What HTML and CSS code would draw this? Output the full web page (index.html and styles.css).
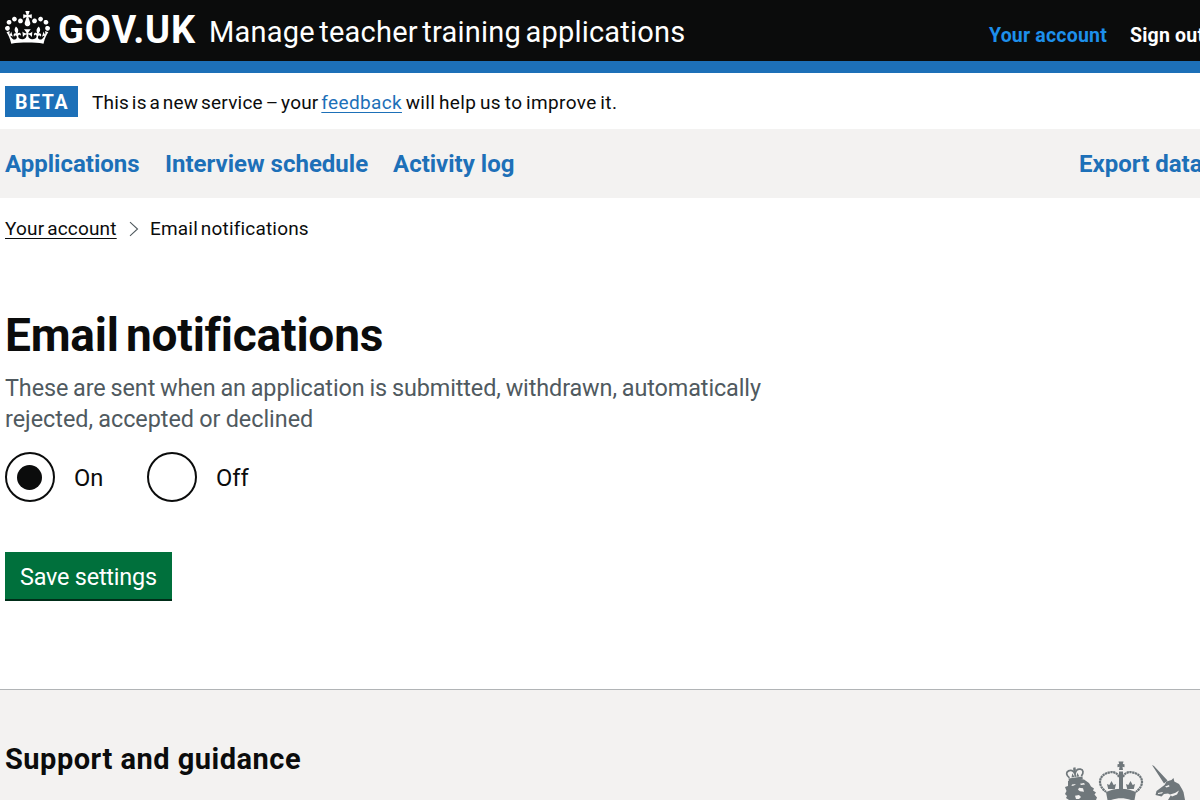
FILE: index.html
```
<!DOCTYPE html>
<html lang="en">
<head>
<meta charset="utf-8">
<title>Email notifications - Manage teacher training applications - GOV.UK</title>
<link rel="stylesheet" href="styles.css">
</head>
<body>
<header class="header">
  <div class="container header-inner">
    <a class="logo" href="#">
      <svg class="crown" viewBox="0 0 132 97" width="45" height="33" fill="currentColor" aria-hidden="true"><path d="M25 30.2c3.5 1.5 7.7-.2 9.1-3.7 1.5-3.6-.2-7.8-3.9-9.2-3.6-1.4-7.6.3-9.1 3.9-1.4 3.5.3 7.5 3.9 9zM9 39.5c3.6 1.5 7.8-.2 9.2-3.7 1.5-3.6-.2-7.8-3.9-9.1-3.6-1.5-7.6.2-9.1 3.8-1.4 3.5.3 7.5 3.8 9zM4.4 57.2c3.5 1.5 7.7-.2 9.1-3.8 1.5-3.6-.2-7.7-3.9-9.1-3.5-1.5-7.6.3-9.1 3.8-1.4 3.5.3 7.6 3.9 9.1zm38.3-21.4c3.5 1.5 7.7-.2 9.1-3.8 1.5-3.6-.2-7.7-3.9-9.1-3.6-1.5-7.6.3-9.1 3.8-1.3 3.6.4 7.7 3.9 9.1zm64.4-5.6c-3.6 1.5-7.8-.2-9.1-3.7-1.5-3.6.2-7.8 3.8-9.2 3.6-1.4 7.7.3 9.2 3.9 1.3 3.5-.4 7.5-3.9 9zm15.9 9.3c-3.6 1.5-7.7-.2-9.1-3.7-1.5-3.6.2-7.8 3.7-9.1 3.6-1.5 7.7.2 9.2 3.8 1.5 3.5-.3 7.5-3.8 9zm4.7 17.7c-3.6 1.5-7.8-.2-9.2-3.8-1.5-3.6.2-7.7 3.9-9.1 3.6-1.5 7.7.3 9.2 3.8 1.3 3.5-.4 7.6-3.9 9.1zM89.3 35.8c-3.6 1.5-7.8-.2-9.2-3.8-1.4-3.6.2-7.7 3.9-9.1 3.6-1.5 7.7.3 9.2 3.8 1.4 3.6-.3 7.7-3.9 9.1zM69.7 17.7l8.9 4.7V9.3l-8.9 2.8c-.2-.3-.5-.6-.9-.9L72.4 0H59.6l3.5 11.2c-.3.3-.6.5-.9.9l-8.8-2.8v13.1l8.8-4.7c.3.3.6.7.9.9l-5 15.4v.1c-.2.8-.4 1.6-.4 2.4 0 4.1 3.1 7.5 7 8.1h.2c.3 0 .7.1 1 .1.4 0 .7 0 1-.1h.2c4-.6 7.1-4.1 7.1-8.1 0-.8-.1-1.7-.4-2.4V34l-5.1-15.4c.4-.2.7-.6 1-.9zM66 92.8c16.9 0 32.8 1.1 47.1 3.2 4-16.9 8.9-26.7 14-33.5l-9.6-3.4c1 4.9 1.1 7.2 0 10.2-1.5-1.4-3-4.3-4.2-8.7L108.6 76c2.8-2 5-3.2 7.5-3.3-4.4 9.4-10 11.9-13.6 11.2-4.3-.8-6.3-4.6-5.6-7.9 1-4.7 5.7-5.9 8-.5 4.3-8.7-3-11.4-7.6-8.8 7.1-7.2 7.9-13.5 2.1-21.1-8 6.1-8.1 12.3-4.5 20.8-4.7-5.4-12.1-2.5-9.5 6.2 3.4-5.2 7.9-2 7.2 3.1-.6 4.3-6.4 7.8-13.5 7.2-10.3-.9-10.9-8-11.2-13.8 2.5-.5 7.1 1.8 11 7.3L80.2 60c-4.1 4.4-8 5.3-12.3 5.4 1.4-4.4 8-11.6 8-11.6H55.5s6.4 7.2 7.9 11.6c-4.2-.1-8-1-12.3-5.4l1.4 16.4c3.9-5.5 8.5-7.7 10.9-7.3-.3 5.8-.9 12.8-11.1 13.8-7.2.6-12.9-2.9-13.5-7.2-.7-5 3.8-8.3 7.1-3.1 2.7-8.7-4.6-11.6-9.4-6.2 3.7-8.5 3.6-14.7-4.6-20.8-5.8 7.6-5 13.9 2.2 21.1-4.7-2.6-11.9.1-7.7 8.8 2.3-5.5 7.1-4.2 8.1.5.7 3.3-1.3 7.1-5.7 7.9-3.5.7-9-1.8-13.5-11.2 2.5.1 4.7 1.3 7.5 3.3l-4.7-15.4c-1.2 4.4-2.7 7.2-4.3 8.7-1.1-3-.9-5.3 0-10.2l-9.5 3.4c5 6.9 9.9 16.7 14 33.5 14.8-2.1 30.8-3.2 47.7-3.2z"/></svg>
      <span class="logo-text">GOV.UK</span>
    </a>
    <a class="service-name" href="#">Manage teacher training applications</a>
    <nav class="account-nav">
      <a class="account-link account-link-active" href="#">Your account</a>
      <a class="account-link sign-out" href="#">Sign out</a>
    </nav>
  </div>
</header>
<div class="phase">
  <div class="container phase-inner">
    <strong class="tag">BETA</strong>
    <span class="phase-text"><span class="phase-intro">This is a new service – your </span><a class="link" href="#">feedback</a> will help us to improve it.</span>
  </div>
</div>
<nav class="primary">
  <div class="container primary-inner">
    <a class="primary-link link-applications" href="#">Applications</a>
    <a class="primary-link link-interviews" href="#">Interview schedule</a>
    <a class="primary-link link-activity" href="#">Activity log</a>
    <a class="primary-link link-export" href="#">Export data</a>
  </div>
</nav>
<main class="container main">
  <div class="breadcrumbs">
    <a class="crumb-link" href="#">Your account</a>
    <svg class="chevron" width="10" height="16" viewBox="0 0 10 16" fill="none" stroke="#505a5f" stroke-width="1.1" aria-hidden="true"><path d="M1 1.200 8.500 8 1 14.800"/></svg>
    <span class="crumb-current">Email notifications</span>
  </div>
  <h1 class="title">Email notifications</h1>
  <p class="hint"><span class="hint-first">These are sent when an application is submitted, withdrawn, automatically</span><br><span class="hint-second">rejected, accepted or declined</span></p>
  <div class="radios">
    <label class="radio"><span class="circle"><span class="dot"></span></span><span class="radio-label">On</span></label>
    <label class="radio"><span class="circle"></span><span class="radio-label">Off</span></label>
  </div>
  <button class="button" type="button">Save settings</button>
</main>
<footer class="footer">
  <div class="container footer-inner">
    <h2 class="footer-title">Support and guidance</h2>
    <svg class="crest" width="128" height="40" viewBox="0 0 128 40" fill="#6f777b" aria-hidden="true">
      <g transform="rotate(-8 15 14)">
        <path d="M8 17.500h14v3H8z"/>
        <path d="M9 17c-3-3-3-6 0-7s5 1 6 4c1-3 3-5 6-4s3 4 0 7M15 9v8" fill="none" stroke="#6f777b" stroke-width="1.700"/>
        <path d="M14 7.500h2.400v3H14zM11 17l1.500-4 1.500 4zm5 0 1.500-4 1.500 4z"/>
      </g>
      <path d="M8 21l8-2 8 .5 5 3.500 2 3.500 3 2-1 2 3 2-1.500 2 2.500 3-1 2.500H9l-3-2 1-2-2-2 1.500-3L5 27l3-1z"/>
      <path fill="#f3f2f1" d="M12 24.500l4-.5-2 1.500-2.500.5zm8-.8 4-.7 1 1.500-4 .5zm-1 4 4 .5 1 3.500-4-.5-2-1.500zm-4 8 4-.6 2 2-2 2h-3z"/>
      <path d="M58.500 1.500h5L62.800 4l1.700.3v2.900l-2-.4.500 3.200h-4l.5-3.200-2 .4V4.300l1.700-.3z"/>
      <path d="M59 11.500h4V29h-4z"/>
      <path d="M59 17c-1.500-4-5.500-5.500-9-4.700-6 1-10 4.700-10 9.700 0 4 3 7.500 6 10M63 17c1.500-4 5.500-5.500 9-4.700 6 1 10 4.700 10 9.700 0 4-3 7.500-6 10" fill="none" stroke="#6f777b" stroke-width="2.200" stroke-dasharray="2.300 .5"/>
      <path d="m51.500 21 2.200 4 2.300-1-1.200 5h-6.600l-1.200-5 2.300 1zm19 0 2.200 4 2.300-1-1.200 5h-6.600l-1.200-5 2.300 1z"/>
      <path d="M46 32c9-4.500 21-4.500 30 0l-1.500 8H71c-7-2.500-13-2.500-20 0h-3.500z"/>
      <path d="m92 5 2 1 13.500 14.500-3.500 3zM113.500 18l.8 3.500 4.700 2.500 3 5 1.500 3 1.500 8h-17l3-5-3-1.500-4 .5-2.500 2.500-6-1.500 1-4 8-6 2-3.500 5-1.500z"/>
      <path fill="#f3f2f1" d="m105 26.500 4-1.500.5 1.500-3 1zM98 33l5-1-1 1.500-4 .5zm12 1.500 5-1.500 4-2.500-2 4-5 2z"/>
    </svg>
  </div>
</footer>
</body>
</html>
```
FILE: styles.css
```
* { box-sizing: border-box; }
html, body { margin: 0; height: 800px; overflow: hidden; }
body { display: flex; flex-direction: column; font-family: Roboto, "Noto Sans", sans-serif; color: #0b0c0c; background: #fff; white-space: nowrap; }
a { color: inherit; text-decoration: none; }
.container { width: 1210px; padding-left: 5px; padding-right: 5px; }
.header { height: 73px; background: #0b0c0c; border-bottom: 12px solid #1d70b8; color: #fff; }
.header-inner { display: flex; height: 61px; align-items: flex-start; }
.logo { display: flex; width: 204px; padding-top: 11px; gap: 8px; }
.logo-text { font-weight: 700; font-size: 38px; line-height: 38px; letter-spacing: .9px; }
.service-name { font-size: 29px; line-height: 40px; padding-top: 12px; letter-spacing: .2px; word-spacing: -2.8px; }
.account-nav { display: flex; margin-left: auto; gap: 23px; width: 216px; padding-top: 23px; }
.account-link { font-weight: 700; font-size: 19.5px; line-height: 25px; letter-spacing: .2px; }
.account-link-active { color: #1d8feb; width: 118px; }
.phase { height: 56px; }
.phase-inner { display: flex; align-items: flex-start; padding-top: 13px; gap: 14px; }
.tag { width: 73px; height: 31px; padding-left: 10px; background: #1d70b8; color: #fff; font-size: 19.5px; line-height: 33px; letter-spacing: 1.6px; }
.phase-text { font-size: 19px; line-height: 33px; letter-spacing: .35px; word-spacing: -1.3px; }
.phase-intro { letter-spacing: .2px; word-spacing: -2.1px; }
.link { color: #1d70b8; text-decoration: underline; text-underline-offset: 3px; text-decoration-thickness: 1px; }
.primary { height: 69px; background: #f3f2f1; color: #1d70b8; }
.primary-inner { display: flex; align-items: center; height: 69px; }
.primary-link { font-weight: 700; font-size: 24px; line-height: 30px; }
.link-applications { width: 160px; }
.link-interviews { width: 228px; }
.link-export { margin-left: auto; width: 126px; }
.breadcrumbs { display: flex; align-items: center; height: 25px; margin-top: 18px; font-size: 19px; line-height: 25px; letter-spacing: .18px; word-spacing: -2px; }
.crumb-link { width: 112px; text-decoration: underline; text-underline-offset: 3px; text-decoration-thickness: 1px; }
.chevron { margin: 1px 11px 0 12px; }
.title { margin: 69px 0 0; font-size: 46px; line-height: 50px; font-weight: 700; letter-spacing: -.2px; word-spacing: -4px; }
.hint { margin: 13px 0 0; color: #505a5f; font-size: 23.4px; line-height: 31px; }
.hint-first { letter-spacing: -.1px; word-spacing: -.8px; }
.hint-second { letter-spacing: -.02px; word-spacing: -.6px; }
.radios { display: flex; height: 50px; margin-top: 17px; }
.radio { display: flex; align-items: center; width: 142px; gap: 19px; font-size: 23.7px; line-height: 50px; }
.radio-label { padding-top: 2px; }
.circle { display: flex; align-items: center; justify-content: center; width: 50px; height: 50px; border: 2px solid #0b0c0c; border-radius: 50%; }
.dot { width: 25px; height: 25px; margin-right: 1px; border-radius: 50%; background: #0b0c0c; }
.button { display: block; margin-top: 50px; width: 167px; height: 47px; padding: 3px 0 0 15px; border: 0; box-shadow: 0 2px 0 #002d18; background: #00703c; color: #fff; font-family: inherit; font-size: 23.4px; line-height: 44px; letter-spacing: -.2px; text-align: left; }
.footer { margin-top: 90px; flex: 1; min-height: 0; overflow: hidden; border-top: 1px solid #b1b4b6; background: #f3f2f1; }
.footer-inner { display: flex; align-items: flex-start; justify-content: space-between; }
.footer-title { margin: 51px 0 0; font-size: 29px; line-height: 36px; font-weight: 700; letter-spacing: .5px; }
.crest { margin: 70px 17px 0 0; }
```
